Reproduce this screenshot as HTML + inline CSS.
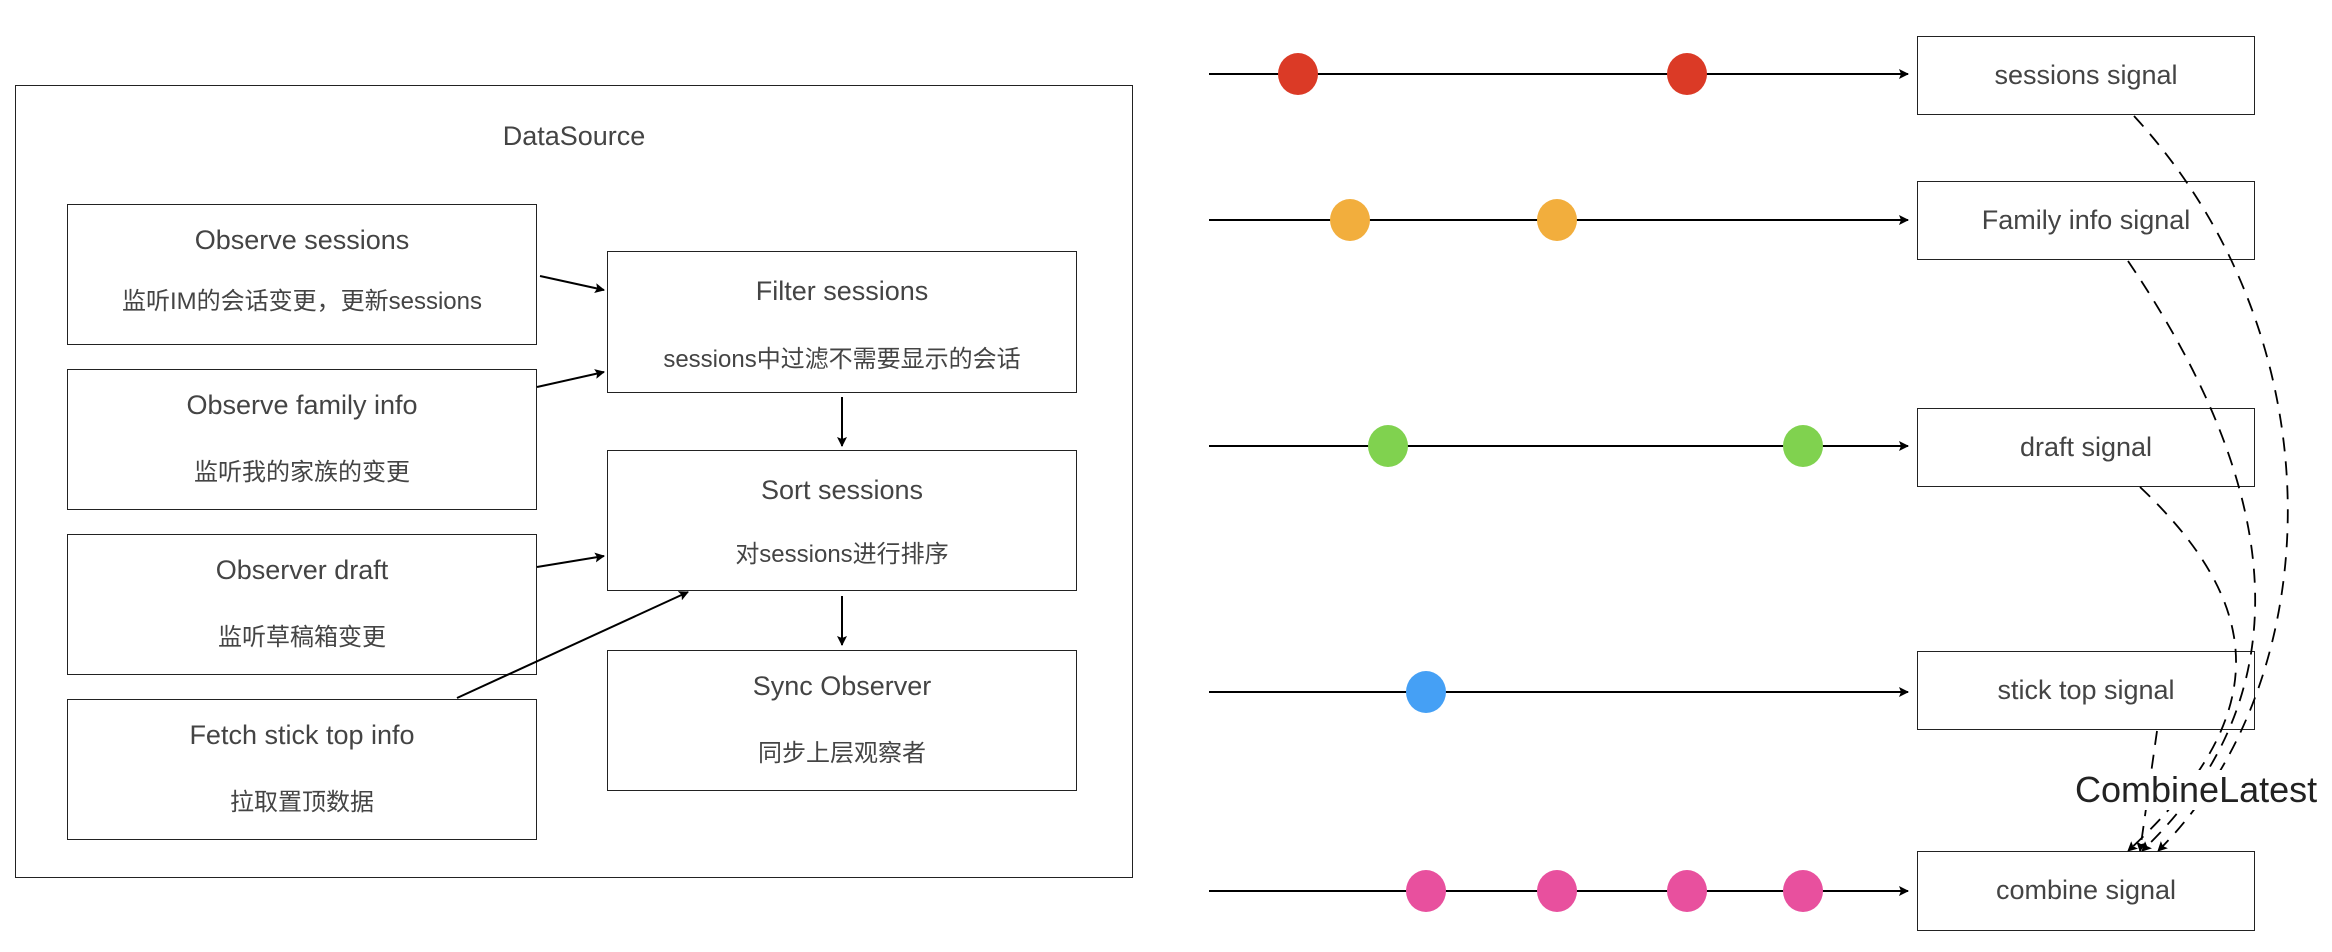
<!DOCTYPE html>
<html><head><meta charset="utf-8"><style>
body{margin:0;width:2332px;height:952px;background:#fff;position:relative;overflow:hidden;font-family:"Liberation Sans","Noto Sans CJK SC",sans-serif;color:#444}
.b{position:absolute;border:1.5px solid #222;box-sizing:border-box;background:#fff}
.t{position:absolute;left:0;right:0;text-align:center;white-space:nowrap}
.h{font-size:27px}.s{font-size:24px}
</style></head><body>
<div class="b" style="left:15px;top:85px;width:1118px;height:793px"></div>
<div class="t h" style="left:15px;width:1118px;top:121px">DataSource</div>

<div class="b" style="left:67px;top:204px;width:470px;height:141px"><div class="t h" style="top:20px">Observe sessions</div><div class="t s" style="top:76px">监听IM的会话变更，更新sessions</div></div>
<div class="b" style="left:67px;top:369px;width:470px;height:141px"><div class="t h" style="top:20px">Observe family info</div><div class="t s" style="top:82px">监听我的家族的变更</div></div>
<div class="b" style="left:67px;top:534px;width:470px;height:141px"><div class="t h" style="top:20px">Observer draft</div><div class="t s" style="top:82px">监听草稿箱变更</div></div>
<div class="b" style="left:67px;top:699px;width:470px;height:141px"><div class="t h" style="top:20px">Fetch stick top info</div><div class="t s" style="top:82px">拉取置顶数据</div></div>

<div class="b" style="left:607px;top:251px;width:470px;height:142px"><div class="t h" style="top:24px">Filter sessions</div><div class="t s" style="top:87px">sessions中过滤不需要显示的会话</div></div>
<div class="b" style="left:607px;top:450px;width:470px;height:141px"><div class="t h" style="top:24px">Sort sessions</div><div class="t s" style="top:83px">对sessions进行排序</div></div>
<div class="b" style="left:607px;top:650px;width:470px;height:141px"><div class="t h" style="top:20px">Sync Observer</div><div class="t s" style="top:82px">同步上层观察者</div></div>

<div class="b" style="left:1917px;top:36px;width:338px;height:79px"><div class="t h" style="top:23px">sessions signal</div></div>
<div class="b" style="left:1917px;top:181px;width:338px;height:79px"><div class="t h" style="top:23px">Family info signal</div></div>
<div class="b" style="left:1917px;top:408px;width:338px;height:79px"><div class="t h" style="top:23px">draft signal</div></div>
<div class="b" style="left:1917px;top:651px;width:338px;height:79px"><div class="t h" style="top:23px">stick top signal</div></div>
<div class="b" style="left:1917px;top:851px;width:338px;height:80px"><div class="t h" style="top:23px">combine signal</div></div>

<svg width="2332" height="952" style="position:absolute;left:0;top:0">
<defs><marker id="a" markerWidth="10" markerHeight="10" refX="9" refY="5" orient="auto" markerUnits="userSpaceOnUse"><path d="M0,0 L10,5 L0,10 L2,5Z" fill="#000"/></marker></defs>
<g stroke="#000" stroke-width="2" fill="none" marker-end="url(#a)">
<line x1="540" y1="276" x2="604" y2="290"/>
<line x1="537" y1="387" x2="604" y2="372"/>
<line x1="537" y1="567" x2="604" y2="556"/>
<line x1="457" y1="698" x2="688" y2="592"/>
<line x1="842" y1="397" x2="842" y2="446"/>
<line x1="842" y1="596" x2="842" y2="645"/>
<line x1="1209" y1="74" x2="1908" y2="74"/>
<line x1="1209" y1="220" x2="1908" y2="220"/>
<line x1="1209" y1="446" x2="1908" y2="446"/>
<line x1="1209" y1="692" x2="1908" y2="692"/>
<line x1="1209" y1="891" x2="1908" y2="891"/>
</g>
<g stroke="#000" stroke-width="1.8" fill="none" stroke-dasharray="14,10" marker-end="url(#a)">
<path d="M2134,116 C2340,340 2330,680 2158,851"/>
<path d="M2128,261 C2290,500 2300,700 2142,851"/>
<path d="M2140,487 C2270,610 2270,720 2128,851"/>
<path d="M2157,731 L2140,851"/>
</g>
<g>
<ellipse cx="1298" cy="74" rx="20" ry="21" fill="#db3a26"/><ellipse cx="1687" cy="74" rx="20" ry="21" fill="#db3a26"/>
<ellipse cx="1350" cy="220" rx="20" ry="21" fill="#f2ae3d"/><ellipse cx="1557" cy="220" rx="20" ry="21" fill="#f2ae3d"/>
<ellipse cx="1388" cy="446" rx="20" ry="21" fill="#80d24f"/><ellipse cx="1803" cy="446" rx="20" ry="21" fill="#80d24f"/>
<ellipse cx="1426" cy="692" rx="20" ry="21" fill="#45a0f5"/>
<ellipse cx="1426" cy="891" rx="20" ry="21" fill="#e8509e"/><ellipse cx="1557" cy="891" rx="20" ry="21" fill="#e8509e"/><ellipse cx="1687" cy="891" rx="20" ry="21" fill="#e8509e"/><ellipse cx="1803" cy="891" rx="20" ry="21" fill="#e8509e"/>
</g>
</svg>
<div style="position:absolute;left:2075px;top:770px;font-size:36px;color:#222;white-space:nowrap;background:#fff;line-height:40px">CombineLatest</div>
</body></html>
